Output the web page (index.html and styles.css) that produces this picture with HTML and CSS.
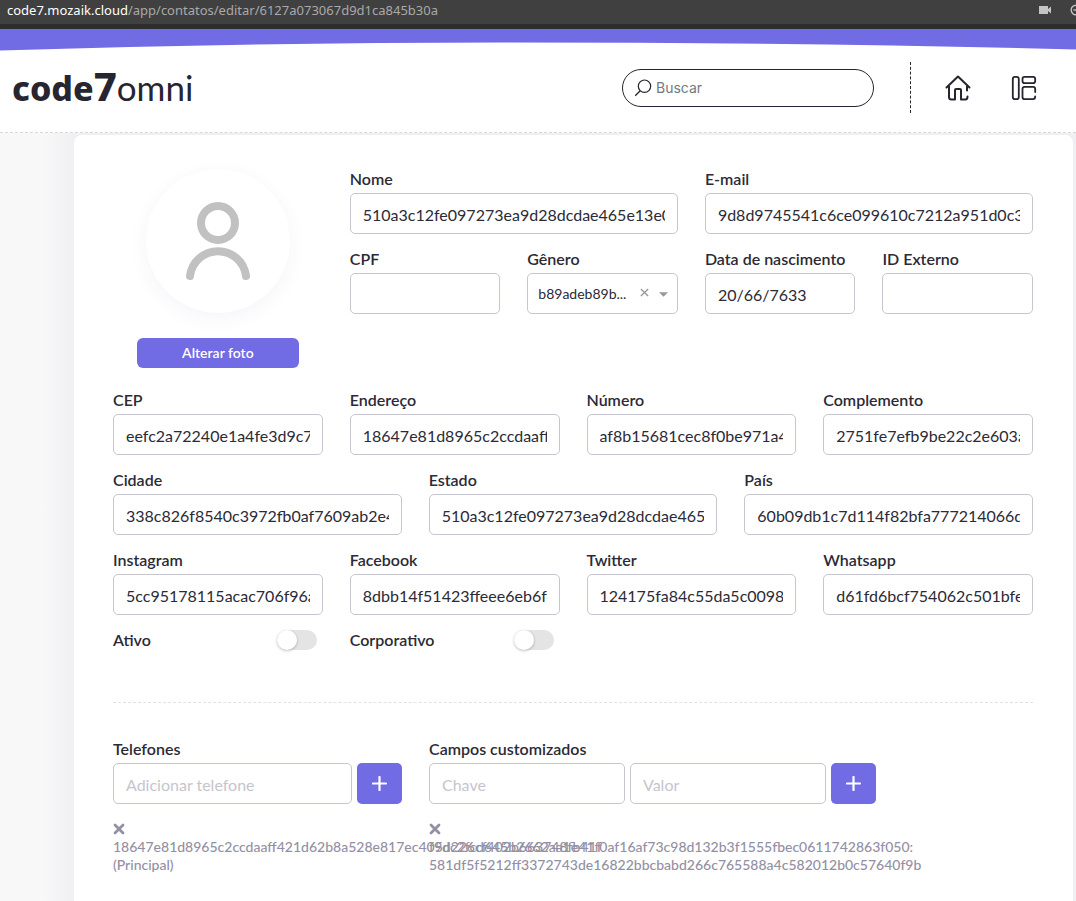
FILE: index.html
```html
<!DOCTYPE html>
<html lang="pt-BR">
<head>
<meta charset="utf-8">
<title>Editar contato</title>
<link rel="stylesheet" href="styles.css">
</head>
<body>
<div class="addressbar">
  <div class="url"><b>code7.mozaik.cloud</b>/app/contatos/editar/6127a073067d9d1ca845b30a</div>
  <svg class="cam" viewBox="0 0 12 8" aria-hidden="true"><path d="M0 0H9V3L12 0.5V7.5L9 5V8H0z" fill="#c4c4c4"/></svg>
  <svg class="lens" viewBox="0 0 12 12" aria-hidden="true"><circle cx="6" cy="6" r="4.8" fill="none" stroke="#c4c4c4" stroke-width="1.4"/><path d="M3.5 6H8.500" stroke="#c4c4c4" stroke-width="1.4"/></svg>
</div>
<header class="top">
  <svg class="curve" viewBox="0 0 1076 22" preserveAspectRatio="none" aria-hidden="true"><path d="M0 0H1076V20.500Q810 13.500 500 13.500Q250 13.500 0 21.500Z" fill="#716be4"/></svg>
  <div class="bar">
    <a class="logo" href="#"><span class="logo-code">code</span><span class="logo-seven">7</span><span class="logo-omni">omni</span></a>
    <label class="search">
      <svg viewBox="0 0 18 18" aria-hidden="true"><circle cx="10.500" cy="7.200" r="6.200" fill="none" stroke="#25242f" stroke-width="1.200"/><path d="M6.200 11.800L1.200 16.800" stroke="#25242f" stroke-width="1.300"/></svg>
      <input type="search" placeholder="Buscar" aria-label="Buscar">
    </label>
    <nav class="nav">
      <a href="#" aria-label="Início"><svg viewBox="0 0 26 26" fill="none" stroke="#25242f" stroke-width="2" stroke-linecap="round" stroke-linejoin="round"><path d="M1.500 12.500L13 1.500L24.500 12.500M4 11V22Q4 24.500 6.500 24.500H10V15Q10 14 11 14H15Q16 14 16 15V24.500H20.500Q22.500 24.500 22.500 21.500M22 11V15.500"/></svg></a>
      <a href="#" aria-label="Painel"><svg viewBox="0 0 26 26" fill="none" stroke="#25242f" stroke-width="1.800" stroke-linecap="round"><rect x="1.800" y="1.800" width="6" height="22.400" rx="2.200"/><rect x="11.500" y="1.800" width="12.700" height="6.400" rx="2.200"/><path d="M24.200 17V14Q24.200 11.800 22 11.800H13.700Q11.500 11.800 11.500 14V22Q11.500 24.200 13.700 24.200H22Q24.200 24.200 24.200 21.500"/></svg></a>
    </nav>
  </div>
</header>
<main class="page">
<form class="card">
  <div class="head">
    <div class="photo">
      <div class="avatar"><svg viewBox="0 0 64 78" fill="none" stroke="#c1c1c1" stroke-width="8"><circle cx="32" cy="21" r="17"/><path d="M4 74A28.200 28.200 0 0 1 60 74" stroke-linecap="round"/></svg></div>
      <button type="button" class="change">Alterar foto</button>
    </div>
    <div class="grid four basics">
      <div class="field wide"><label for="nome">Nome</label><input id="nome" value="510a3c12fe097273ea9d28dcdae465e13e0"></div>
      <div class="field wide"><label for="email">E-mail</label><input id="email" value="9d8d9745541c6ce099610c7212a951d0c3e"></div>
      <div class="field"><label for="cpf">CPF</label><input id="cpf"></div>
      <div class="field"><label for="genero">Gênero</label>
        <div class="picker"><select id="genero"><option>b89adeb89b...</option></select><button type="button" class="clear" aria-label="Limpar"><svg viewBox="0 0 10 10"><path d="M1 1L9 9M9 1L1 9" stroke="#999" stroke-width="1.500"/></svg></button><svg class="caret" viewBox="0 0 10 5" aria-hidden="true"><path d="M0 0H10L5 5Z" fill="#999"/></svg></div></div>
      <div class="field"><label for="nasc">Data de nascimento</label><input id="nasc" value="20/66/7633"></div>
      <div class="field"><label for="ext">ID Externo</label><input id="ext"></div>
    </div>
  </div>
  <div class="rows">
    <div class="grid four">
      <div class="field"><label for="cep">CEP</label><input id="cep" value="eefc2a72240e1a4fe3d9c7b2"></div>
      <div class="field"><label for="end">Endereço</label><input id="end" value="18647e81d8965c2ccdaaff421d"></div>
      <div class="field"><label for="num">Número</label><input id="num" value="af8b15681cec8f0be971a4"></div>
      <div class="field"><label for="comp">Complemento</label><input id="comp" value="2751fe7efb9be22c2e603a8"></div>
    </div>
    <div class="grid three">
      <div class="field"><label for="cid">Cidade</label><input id="cid" value="338c826f8540c3972fb0af7609ab2e4"></div>
      <div class="field"><label for="est">Estado</label><input id="est" value="510a3c12fe097273ea9d28dcdae465e13e0"></div>
      <div class="field"><label for="pais">País</label><input id="pais" value="60b09db1c7d114f82bfa777214066d"></div>
    </div>
    <div class="grid four">
      <div class="field"><label for="ig">Instagram</label><input id="ig" value="5cc95178115acac706f96a2"></div>
      <div class="field"><label for="fb">Facebook</label><input id="fb" value="8dbb14f51423ffeee6eb6f4"></div>
      <div class="field"><label for="tw">Twitter</label><input id="tw" value="124175fa84c55da5c0098"></div>
      <div class="field"><label for="wa">Whatsapp</label><input id="wa" value="d61fd6bcf754062c501bfe"></div>
    </div>
    <div class="grid four">
      <label class="switch">Ativo<input type="checkbox" role="switch"></label>
      <label class="switch">Corporativo<input type="checkbox" role="switch"></label>
    </div>
  </div>
  <hr>
  <div class="grid extras">
    <section class="field"><label for="tel">Telefones</label>
      <div class="adder"><input id="tel" placeholder="Adicionar telefone"><button type="button" class="add" aria-label="Adicionar telefone"><svg viewBox="0 0 15 15"><path d="M7.500 1V14M1 7.500H14" stroke="#fff" stroke-width="2.200" stroke-linecap="round"/></svg></button></div>
      <div class="entry"><button type="button" class="remove" aria-label="Remover telefone"><svg viewBox="0 0 12 12"><path d="M2 2L10 10M10 2L2 10" stroke="#9390a3" stroke-width="2.800" stroke-linecap="round"/></svg></button><p>18647e81d8965c2ccdaaff421d62b8a528e817ec405d226cf402b663748fb41f (Principal)</p></div>
    </section>
    <section class="field"><label for="chave">Campos customizados</label>
      <div class="adder"><input id="chave" placeholder="Chave"><input placeholder="Valor" aria-label="Valor"><button type="button" class="add" aria-label="Adicionar campo"><svg viewBox="0 0 15 15"><path d="M7.500 1V14M1 7.500H14" stroke="#fff" stroke-width="2.200" stroke-linecap="round"/></svg></button></div>
      <div class="entry"><button type="button" class="remove" aria-label="Remover campo"><svg viewBox="0 0 12 12"><path d="M2 2L10 10M10 2L2 10" stroke="#9390a3" stroke-width="2.800" stroke-linecap="round"/></svg></button><p>f9dc2fcd645b2662aa1e41f0af16af73c98d132b3f1555fbec0611742863f050: 581df5f5212ff3372743de16822bbcbabd266c765588a4c582012b0c57640f9b</p></div>
    </section>
  </div>
</form>
</main>
</body>
</html>
```
FILE: styles.css
```css
* { box-sizing: border-box; }
body { margin: 0; min-height: 100vh; display: flex; flex-direction: column; background: #f8f8f8; color: #2b2a35; font: 16px/24px Lato, "Open Sans", sans-serif; overflow-x: hidden; }
button, input, select { font: inherit; color: inherit; }
button { border: 0; padding: 0; background: none; display: flex; align-items: center; justify-content: center; }

.addressbar { display: flex; align-items: center; height: 29px; padding: 0 0 4px 7px; background: #404040; border-bottom: 5px solid #2d2d2d; overflow: hidden; color: #a9a9a9; font: 13px/20px "Noto Sans", sans-serif; flex: none; }
.url { flex: 1; white-space: nowrap; }
.url b { font-weight: 400; color: #fff; }
.cam { width: 12px; height: 8px; }
.lens { width: 12px; height: 12px; margin: 0 -6px 0 19px; flex: none; }

.top { background: #fff; border-bottom: 1px dashed #d8d8dc; flex: none; }
.curve { display: block; width: 100%; height: 22px; }
.bar { display: flex; align-items: center; height: 81px; padding: 0 39px 8px 12px; }
.logo { flex: 1; display: flex; align-items: baseline; padding-bottom: 2px; color: #272630; text-decoration: none; font: 34px/44px "Noto Sans", sans-serif; }
.logo-code { font-weight: 800; }
.logo-seven { font-weight: 800; font-size: 40px; }
.logo-omni { font-family: Lato, sans-serif; font-size: 35px; }
.search { display: flex; align-items: center; gap: 4px; width: 252px; height: 38px; padding: 0 11px; border: 1px solid #25242f; border-radius: 19px; }
.search svg { width: 18px; height: 18px; }
.search input { flex: 1; min-width: 0; border: 0; padding: 0; outline: 0; background: none; font: 14px/20px Inter, sans-serif; }
.search input::placeholder { color: #757a80; opacity: 1; }
.nav { display: flex; align-items: center; gap: 40px; height: 51px; margin-left: 36px; padding-left: 34px; border-left: 1px dashed #25242f; }
.nav svg { display: block; width: 26px; height: 26px; }

.page { flex: 1; display: flex; padding: 2px 3px 0 74px; background: linear-gradient(90deg, #f8f8f8 0, #f8f8f8 42px, #f0f0f3 74px); }
.card { flex: 1; min-width: 0; padding: 32px 40px 20px 39px; background: #fff; border-radius: 8px 8px 0 0; }
.grid { display: grid; column-gap: 27px; row-gap: 13px; }
.four { grid-template-columns: repeat(4, minmax(0, 1fr)); }
.three { grid-template-columns: repeat(3, minmax(0, 1fr)); }
.head { display: grid; grid-template-columns: repeat(4, minmax(0, 1fr)); column-gap: 27px; }
.basics { grid-column: span 3; align-content: start; }
.wide { grid-column: span 2; }
.photo { display: flex; flex-direction: column; align-items: center; gap: 25px; padding-top: 2px; }
.avatar { display: flex; justify-content: center; width: 144px; height: 144px; padding-top: 33px; border-radius: 50%; background: #fff; box-shadow: 0 5px 20px rgba(60, 60, 130, .05); }
.avatar svg { width: 64px; height: 78px; }
.change { width: 162px; height: 30px; border-radius: 6px; background: #716be4; color: #fff; font-size: 14px; font-weight: 600; }

.field { min-width: 0; }
.field > label { display: block; margin-bottom: 2px; font-weight: 600; }
.field input { display: block; width: 100%; min-width: 0; height: 41px; border: 1px solid #c7c6cf; border-radius: 5px; padding: 2px 12px 0; background: #fff; }
.field input::placeholder { color: #c6c5cd; opacity: 1; }
.picker { position: relative; }
.picker select { appearance: none; width: 100%; height: 41px; border: 1px solid #c7c6cf; border-radius: 5px; padding: 0 40px 0 10px; background: #fff; font-size: 14px; }
.clear { position: absolute; right: 29px; top: 15px; width: 9px; height: 9px; }
.clear svg { width: 9px; height: 9px; }
.caret { position: absolute; right: 10px; top: 19px; width: 9px; height: 5px; }

.rows { display: grid; row-gap: 13px; margin-top: 20px; }
.switch { display: flex; align-items: center; justify-content: space-between; height: 24px; padding-right: 6px; font-weight: 600; }
.switch input { appearance: none; width: 40px; height: 20px; margin: 0; border-radius: 10px; background: #e4e4e4; display: flex; }
.switch input::before { content: ""; width: 20px; height: 20px; border-radius: 50%; background: #fff; box-shadow: 0 1px 3px rgba(0, 0, 0, .25); }
.switch input:checked { background: #716be4; justify-content: flex-end; }

hr { margin: 50px 0 34px; border: 0; border-top: 1px dashed #e2e2e6; }
.extras { grid-template-columns: minmax(0, 289px) minmax(0, 447px); }
.adder { display: flex; gap: 5px; }
.adder input { flex: 1; }
.add { width: 45px; height: 41px; border-radius: 5px; background: #716be4; flex: none; }
.add svg { width: 15px; height: 15px; }
.entry { margin-top: 19px; color: #9390a3; font-size: 14px; line-height: 18px; font-weight: 500; }
.entry p { margin: 3px 0 0; }
.remove svg { display: block; width: 12px; height: 12px; }
```
